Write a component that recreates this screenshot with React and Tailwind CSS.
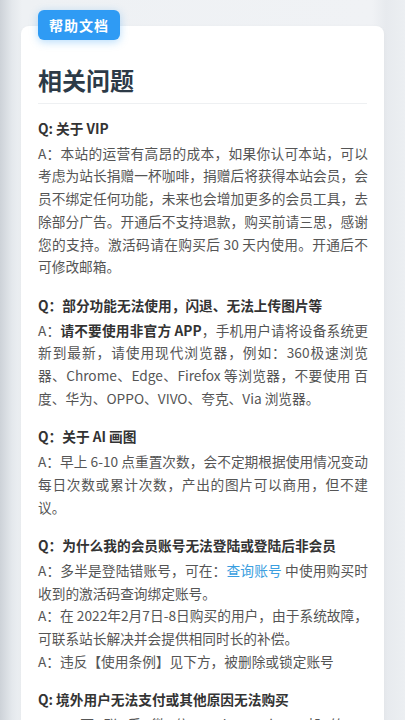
import React from 'react';

const faqs = [
  {
    q: 'Q: 关于 VIP',
    a: [
      <>A：本站的运营有高昂的成本，如果你认可本站，可以考虑为站长捐赠一杯咖啡，捐赠后将获得本站会员，会员不绑定任何功能，未来也会增加更多的会员工具，去除部分广告。开通后不支持退款，购买前请三思，感谢您的支持。激活码请在购买后 30 天内使用。开通后不可修改邮箱。</>,
    ],
  },
  {
    q: 'Q：部分功能无法使用，闪退、无法上传图片等',
    a: [
      <>
        A：<b className="font-bold text-[#333]">请不要使用非官方 APP</b>，手机用户请将设备系统更新到最新，请使用现代浏览器，例如：360极速浏览器、Chrome、Edge、Firefox 等浏览器，不要使用 百度、华为、OPPO、VIVO、夸克、Via 浏览器。
      </>,
    ],
  },
  {
    q: 'Q：关于 AI 画图',
    a: [<>A：早上 6-10 点重置次数，会不定期根据使用情况变动每日次数或累计次数，产出的图片可以商用，但不建议。</>],
  },
  {
    q: 'Q：为什么我的会员账号无法登陆或登陆后非会员',
    a: [
      <>
        A：多半是登陆错账号，可在：<a className="text-[#3a9ee0]">查询账号</a> 中使用购买时收到的激活码查询绑定账号。
      </>,
      <>A：在 2022年2月7日-8日购买的用户，由于系统故障，可联系站长解决并会提供相同时长的补偿。</>,
      <>A：违反【使用条例】见下方，被删除或锁定账号</>,
    ],
  },
  {
    q: 'Q: 境外用户无法支付或其他原因无法购买',
    a: [
      <>
        A：可联系微信：lzwxxxd，邮箱：<a className="text-[#3a9ee0]">jwlkumao@gmail.com</a>
      </>,
    ],
  },
];

export default function App() {
  return (
    <div
      className="h-[720px] overflow-hidden bg-[linear-gradient(to_right,#cdd2d8_0px,#e4e8ec_12px,#eef1f4_22px,#f0f2f5_372px,#e7eaee_386px,#eceff2_405px)] pt-[26px]"
      style={{ fontFamily: '"Noto Sans CJK SC", "Noto Sans", sans-serif' }}
    >
      <div className="relative ml-[21px] w-[363px] rounded-lg bg-white pl-[17px] pr-[16px] pt-[37px] pb-6 shadow-[0_1px_4px_rgba(0,0,0,0.04)]">
        <div className="absolute left-[17px] -top-4 flex h-[30px] w-[82px] items-center justify-center rounded-md bg-[#2f9bf4] text-[14px] font-bold tracking-[1px] text-white shadow-[0_2px_8px_rgba(47,155,244,0.35)]">
          帮助文档
        </div>

        <h1 className="mr-[1px] border-b border-[#eef0f2] pb-[6px] text-[24px] font-bold leading-[34px] text-[#2c3a47]">
          相关问题
        </h1>

        <div className="mt-[13px]">
          {faqs.map((item, i) => (
            <div key={i} className="mb-4">
              <p className="mb-[2px] text-[13.7px] font-bold leading-[22.7px] text-[#333]">{item.q}</p>
              {item.a.map((line, j) => (
                <p key={j} className="text-justify text-[13.7px] leading-[22.7px] text-[#555]">
                  {line}
                </p>
              ))}
            </div>
          ))}
        </div>
      </div>
    </div>
  );
}
